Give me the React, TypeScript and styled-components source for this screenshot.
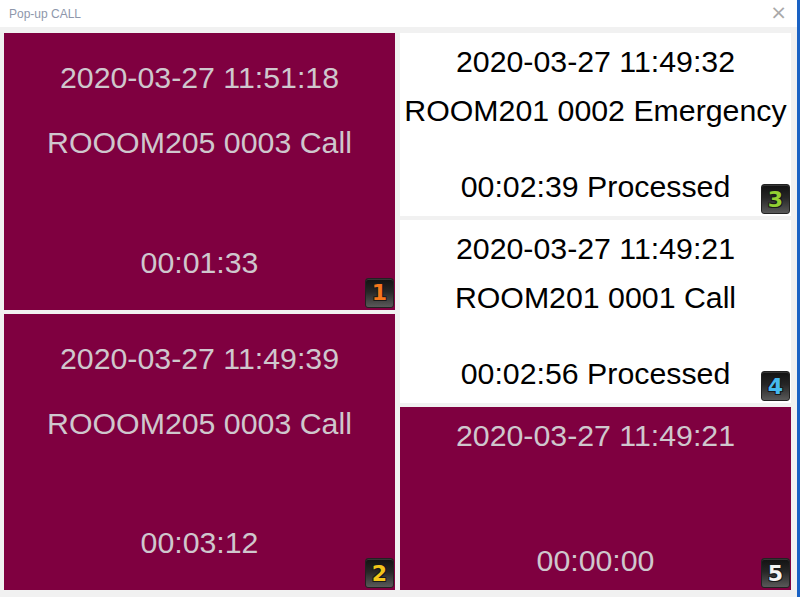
import React from "react";
import styled, { createGlobalStyle, css } from "styled-components";

const GlobalStyle = createGlobalStyle`
  html, body {
    margin: 0;
    padding: 0;
    background: #ffffff;
    font-family: "Liberation Sans", Arial, sans-serif;
  }
`;

interface call {
  id: number;
  date: string;
  room: string;
  status: string;
  alarm: boolean;
}

interface panelProps {
  alarm: boolean;
}

const badgeColors: Record<number, string> = {
  1: "#f5761c",
  2: "#f3c51a",
  3: "#93cf32",
  4: "#45b9ee",
  5: "#f4f4f4",
};

const Window = styled.div`
  width: 800px;
  height: 597px;
  display: flex;
  flex-direction: column;
  box-sizing: border-box;
  border-right: 3px solid #1a62c4;
  background: #f1f1f1;
  overflow: hidden;
`;

const TitleBar = styled.div`
  height: 27px;
  flex: none;
  display: flex;
  align-items: center;
  justify-content: space-between;
  padding: 0 10px 0 9px;
  background: #ffffff;
  font-size: 12px;
  color: #8e97ab;
`;

const Close = styled.span`
  font-family: "DejaVu Sans", sans-serif;
  font-size: 20px;
  color: #a9a9a9;
  line-height: 1;
  margin-top: -4px;
`;

const Board = styled.div`
  flex: 1;
  display: flex;
  gap: 5px;
  padding: 6px 6px 7px 4px;
  min-height: 0;
`;

const Column = styled.div`
  flex: 1;
  display: flex;
  flex-direction: column;
  gap: 4px;
`;

const Panel = styled.div<panelProps>`
  position: relative;
  flex: 1;
  display: flex;
  flex-direction: column;
  align-items: center;
  font-size: 30.3px;
  white-space: nowrap;
  background: #ffffff;
  color: #000000;

  ${(props) =>
    props.alarm &&
    css`
      background: #7f0040;
      color: #cfc7cd;
    `}
`;

const Line = styled.div<{ h: number }>`
  height: ${(props) => props.h}px;
  display: flex;
  align-items: center;
  justify-content: center;
  flex: none;
`;

const Spacer = styled.div`
  flex: 1;
`;

const Badge = styled.div<{ color: string }>`
  position: absolute;
  right: 1px;
  bottom: 2px;
  width: 29px;
  height: 30px;
  box-sizing: border-box;
  border-radius: 3px;
  border: 1px solid #222;
  background: linear-gradient(#121212 0%, #262626 45%, #595959 100%);
  box-shadow: inset 0 1px 0 rgba(255, 255, 255, 0.15);
  display: flex;
  align-items: center;
  justify-content: center;
  font-family: "DejaVu Sans", sans-serif;
  font-weight: bold;
  font-size: 22px;
  color: ${(props) => props.color};
  text-shadow: -1px -1px 0 #1a1a1a, 1px 1px 0 #1a1a1a, 1px -1px 0 #1a1a1a,
    -1px 1px 0 #1a1a1a;
`;

const leftCalls: call[] = [
  { id: 1, date: "2020-03-27 11:51:18", room: "ROOOM205 0003 Call", status: "00:01:33", alarm: true },
  { id: 2, date: "2020-03-27 11:49:39", room: "ROOOM205 0003 Call", status: "00:03:12", alarm: true },
];

const rightCalls: call[] = [
  { id: 3, date: "2020-03-27 11:49:32", room: "ROOM201 0002 Emergency", status: "00:02:39 Processed", alarm: false },
  { id: 4, date: "2020-03-27 11:49:21", room: "ROOM201 0001 Call", status: "00:02:56 Processed", alarm: false },
  { id: 5, date: "2020-03-27 11:49:21", room: "", status: "00:00:00", alarm: true },
];

function CallPanel(props: { item: call; tall: boolean }) {
  const { item, tall } = props;
  return (
    <Panel alarm={item.alarm}>
      <Line h={tall ? 90 : 58}>{item.date}</Line>
      <Line h={40}>{item.room}</Line>
      <Spacer />
      <Line h={tall ? 94 : 58}>{item.status}</Line>
      <Badge color={badgeColors[item.id]}>{item.id}</Badge>
    </Panel>
  );
}

function App() {
  return (
    <>
      <GlobalStyle />
      <Window>
        <TitleBar>
          <span>Pop-up CALL</span>
          <Close>×</Close>
        </TitleBar>
        <Board>
          <Column>
            {leftCalls.map((c) => (
              <CallPanel key={c.id} item={c} tall={true} />
            ))}
          </Column>
          <Column>
            {rightCalls.map((c) => (
              <CallPanel key={c.id} item={c} tall={false} />
            ))}
          </Column>
        </Board>
      </Window>
    </>
  );
}

export default App;
